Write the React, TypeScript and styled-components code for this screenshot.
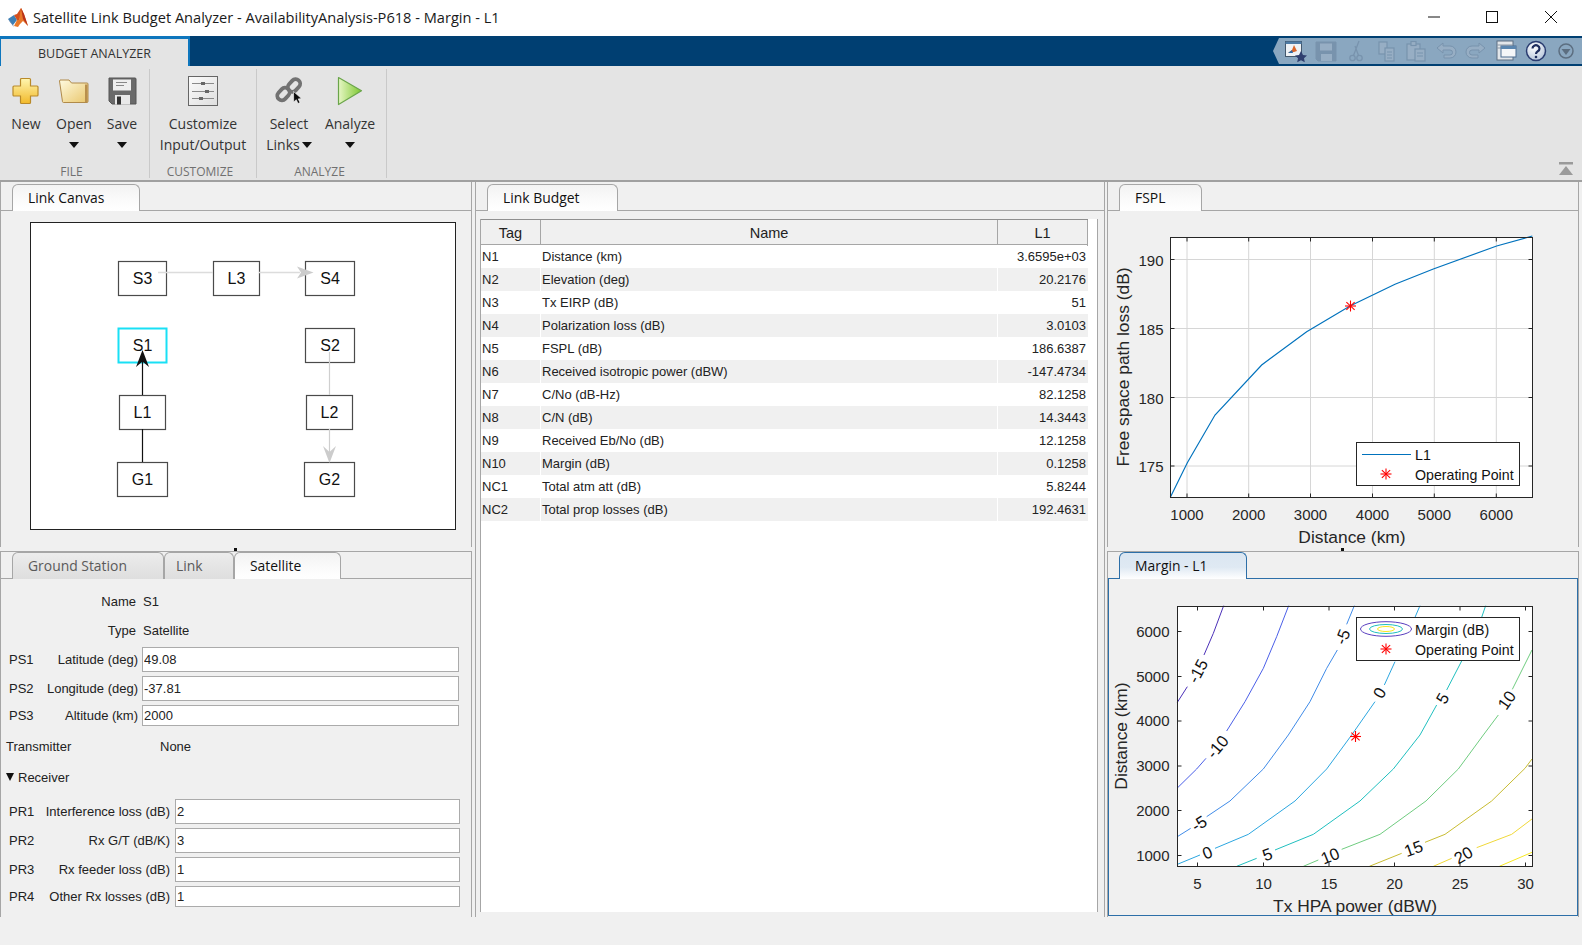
import React from 'react';
import styled, { createGlobalStyle } from 'styled-components';

const Global = createGlobalStyle`
  html, body { margin: 0; padding: 0; background: #f0f0f0; overflow: hidden; }
  #root { width: 1582px; height: 945px; }
  * { box-sizing: border-box; }
`;

const ui = `"Liberation Sans", Arial, sans-serif`;
const seg = `"Open Sans", "Noto Sans", sans-serif`;

const Page = styled.div`
  width: 1582px; height: 945px; display: flex; flex-direction: column;
  background: #f0f0f0; font-family: ${ui}; color: #222; overflow: hidden;
`;
const TitleBar = styled.div`
  height: 36px; background: #fff; display: flex; align-items: center; padding: 0 2px 0 7px;
`;
const TitleText = styled.div`
  font-family: ${seg}; font-size: 14.6px; color: #1a1a1a; margin: -2px 0 0 4px; white-space: nowrap; flex: 1;
`;
const WinBtn = styled.div`
  width: 58.5px; height: 36px; display: flex; align-items: center; justify-content: center;
  margin-top: -3px;
`;
const BlueBand = styled.div`
  height: 30px; background: #003f72; display: flex; align-items: center; justify-content: space-between;
`;
const RibbonTab = styled.div`
  width: 190px; height: 30px; align-self: flex-end; background: #e4e4e4; padding-top: 1px;
  border-top: 3px solid #0e76bd; border-right: 2px solid #0e76bd; border-left: 1px solid #0e76bd;
  font-family: ${seg}; font-size: 12.5px; color: #333; display: flex; align-items: center; justify-content: center;
`;
const QuickBar = styled.div`
  height: 26px; width: 309px; background: #8aa7c0; padding-left: 8px; display: flex; align-items: center;
  clip-path: polygon(6px 0, 100% 0, 100% 100%, 6px 100%, 0 50%);
`;
const QuickSlot = styled.div`
  width: 30px; height: 26px; display: flex; align-items: center; justify-content: center;
`;
const Ribbon = styled.div`
  height: 116px; background: #e4e4e4; display: flex; border-bottom: 2px solid #a0a0a0;
`;
const Section = styled.div<{ $w: number }>`
  width: ${p => p.$w}px; margin: 3px 0 2px; border-right: 1px solid #c9c9c9; display: flex; flex-direction: column;
`;
const ButtonRow = styled.div<{ $pad?: number }>`
  display: flex; flex: 1; padding-left: ${p => p.$pad ?? 0}px;
`;
const SectionLabel = styled.div<{ $pr: number }>`
  height: 26px; text-align: center; padding-right: ${p => p.$pr}px; padding-top: 9px;
  font-family: ${seg}; font-size: 12px; color: #707070; line-height: 16px;
`;
const RibButton = styled.div<{ $w: string }>`
  width: ${p => p.$w}; display: flex; flex-direction: column; align-items: center;
  font-family: ${seg}; font-size: 14px; color: #333; line-height: 21px;
`;
const IconSlot = styled.div`
  height: 34px; margin-top: 5px; margin-bottom: 5px; display: flex; align-items: center; justify-content: center;
`;
const LabelLine = styled.div`
  height: 21px; display: flex; align-items: center; white-space: nowrap;
`;
const Caret = styled.span<{ $gap?: number }>`
  display: inline-block; width: 0; height: 0; margin-left: ${p => p.$gap ?? 0}px;
  border-left: 5.5px solid transparent; border-right: 5.5px solid transparent; border-top: 6px solid #111;
`;
const Collapse = styled.div`
  margin-left: auto; margin-right: 9px; align-self: flex-end; margin-bottom: 6px; height: 13px;
`;
const Body = styled.div`
  display: flex; height: 735px;
`;
const LeftCol = styled.div`
  width: 472px; margin-right: 3px; display: flex; flex-direction: column;
`;
const MidCol = styled.div`
  width: 630px; margin-right: 2px; display: flex; flex-direction: column;
`;
const RightCol = styled.div`
  width: 472px; display: flex; flex-direction: column;
`;
const Panel = styled.div<{ $h?: number; $top?: number }>`
  ${p => (p.$h ? `height: ${p.$h}px;` : 'flex: 1;')}
  margin-top: ${p => p.$top ?? 0}px; display: flex; flex-direction: column; position: relative;
  border-left: 1px solid #a6a6a6; border-right: 1px solid #a6a6a6; background: #f0f0f0;
`;
const SplitterTick = styled.div`
  position: absolute; left: 233px; bottom: -4px; width: 3px; height: 3px; background: #111;
`;
const TabStrip = styled.div<{ $pad: number; $blue?: boolean; $h?: number; $line?: boolean }>`
  height: ${p => p.$h ?? 28}px; padding: 1px 0 0 ${p => p.$pad}px; display: flex; align-items: flex-end; flex: none;
  border-bottom: 1px solid ${p => (p.$blue ? '#2d6fa8' : '#a6a6a6')};
  ${p => (p.$line ? 'border-top: 1px solid #a6a6a6;' : '')}
`;
const Tab = styled.div<{ $w: number; $active?: boolean; $blue?: boolean; $pad?: number }>`
  width: ${p => p.$w}px; height: 27px; margin-bottom: -1px; padding-left: ${p => p.$pad ?? 15}px;
  border: 1px solid ${p => (p.$blue ? '#2d6fa8' : '#a6a6a6')}; border-bottom: none; border-radius: 6px 6px 0 0;
  background: ${p => p.$blue ? 'linear-gradient(#dbe6f1, #dfe9f3 55%, #fff)' : p.$active ? 'linear-gradient(#f3f3f3, #fbfbfb 60%, #fff)' : 'linear-gradient(#ececec, #dedede)'};
  color: ${p => (p.$active ? '#111' : '#5a5a5a')};
  font-family: ${seg}; font-size: 13.9px; line-height: 26px; white-space: nowrap;
`;
const CanvasBox = styled.div`
  margin: 11px 0 0 29px; width: 426px; height: 308px; border: 1px solid #222; background: #fff;
`;
const Form = styled.div`
  flex: 1; display: flex; flex-direction: column; font-size: 13px; color: #222;
`;
const FormRow = styled.div<{ $h: number; $mt?: number; $pl?: number }>`
  height: ${p => p.$h}px; margin-top: ${p => p.$mt ?? 0}px; display: flex; align-items: center; padding-left: ${p => p.$pl ?? 8}px;
  white-space: nowrap;
`;
const Tag = styled.div`
  width: 36px; flex: none;
`;
const FieldLabel = styled.div<{ $w: number; $pr?: number }>`
  width: ${p => p.$w}px; flex: none; text-align: right; padding-right: ${p => p.$pr ?? 4}px;
`;
const Plain = styled.div<{ $w?: number; $pl?: number }>`
  ${p => (p.$w ? `width: ${p.$w}px; flex: none;` : '')} padding-left: ${p => p.$pl ?? 0}px;
`;
const Field = styled.input`
  width: 100%; max-width: 317px; height: 100%; border: 1px solid #ababab; background: #fff; padding: 0 1px;
  font: 13px ${ui}; color: #222; outline: none; margin: 0;
`;
const FieldWide = styled(Field)`
  max-width: 285px;
`;
const TableBox = styled.div`
  margin: 8px 6px 5px 4px; flex: 1; background: #fff; border: 1px solid #a6a6a6; border-top: none; border-bottom: none;
  font-size: 13px; color: #222;
`;
const HeadRow = styled.div`
  display: grid; grid-template-columns: 60px 457px 90px; height: 26px; width: 607px; background: #f0f0f0;
  border-top: 1px solid #8f8f8f; border-bottom: 1px solid #a6a6a6; font-size: 14.5px; line-height: 26px; text-align: center;
`;
const HeadCell = styled.div`
  border-right: 1px solid #a6a6a6;
`;
const BodyRow = styled.div<{ $odd: boolean }>`
  display: grid; grid-template-columns: 60px 457px 90px; height: 23px; width: 607px; line-height: 24px;
  background: ${p => (p.$odd ? '#f0f0f0' : '#fff')};
`;
const TagCell = styled.div`
  padding-left: 1px; border-right: 1px solid #fff;
`;
const NameCell = styled.div`
  padding-left: 1px; border-right: 1px solid #fff;
`;
const ValueCell = styled.div`
  padding-right: 2px; text-align: right;
`;
const PlotHolder = styled.div`
  flex: 1; position: relative;
`;
const PlotSvg = styled.svg`
  display: block;
`;
const BluePane = styled.div`
  height: 337px; border: 1px solid #2d6fa8; border-top: none;
`;
const StatusBar = styled.div`
  flex: 1; background: #f0f0f0;
`;
const DrawG = styled.g`
  font-family: ${ui};
`;

/* --- icons --- */
const MatlabLogo = () => (
  <svg width="22" height="22" viewBox="0 0 22 22">
    <polygon points="1,12 7,8 10,13 6,18" fill="#3d7fb5" />
    <polygon points="1,12 6,18 7,20 3,15" fill="#1e4f86" />
    <polygon points="7,8 10,7 14,1 16,5 12,13 10,13" fill="#d4501e" />
    <polygon points="14,1 17,7 21,19 16,14 13,17 11,20 7,19 10,13 12,13" fill="#e8782a" />
    <polygon points="14,1 17,7 21,19 16,12" fill="#b8321a" />
  </svg>
);
const NewIcon = () => (
  <svg width="30" height="30" viewBox="0 0 30 30">
    <defs><linearGradient id="ng" x1="0" y1="0" x2="0" y2="1"><stop offset="0" stopColor="#fff6b0" /><stop offset="1" stopColor="#f2b92a" /></linearGradient></defs>
    <path d="M10.5 2.5h8a1 1 0 0 1 1 1v6.500h6.500a1 1 0 0 1 1 1v8a1 1 0 0 1-1 1h-6.500v6.500a1 1 0 0 1-1 1h-8a1 1 0 0 1-1-1v-6.500h-6.500a1 1 0 0 1-1-1v-8a1 1 0 0 1 1-1h6.500v-6.500a1 1 0 0 1 1-1z" fill="url(#ng)" stroke="#b98a2a" strokeWidth="1.200" />
  </svg>
);
const OpenIcon = () => (
  <svg width="32" height="28" viewBox="0 0 32 28">
    <defs><linearGradient id="og" x1="0" y1="0" x2="1" y2="1"><stop offset="0" stopColor="#fffbe0" /><stop offset="1" stopColor="#e9c66c" /></linearGradient></defs>
    <path d="M2 3h9l2.500 3H29a1 1 0 0 1 1 1v17.500a1 1 0 0 1-1 1H5.500a1 1 0 0 1-1-.800L1.500 4z" fill="url(#og)" stroke="#b08a4a" strokeWidth="1" />
    <path d="M27 7.500h2.500V25H27z" fill="#b98f4c" />
  </svg>
);
const SaveIcon = () => (
  <svg width="30" height="30" viewBox="0 0 30 30">
    <path d="M2 2h26a1 1 0 0 1 1 1v25H5l-3-3z" fill="#6a6a6a" stroke="#555" />
    <rect x="6" y="3.500" width="18" height="11" fill="#eeeeee" />
    <path d="M9 6.500h11M9 9.500h8" stroke="#888" strokeWidth="1" />
    <rect x="8" y="19" width="15" height="9.500" fill="#e9e9e9" />
    <rect x="10" y="20.500" width="4" height="8" fill="#333" />
  </svg>
);
const CustomizeIcon = () => (
  <svg width="30" height="30" viewBox="0 0 30 30">
    <defs><linearGradient id="cg" x1="0" y1="0" x2="1" y2="1"><stop offset="0" stopColor="#fbfbfb" /><stop offset="1" stopColor="#dedede" /></linearGradient></defs>
    <rect x=".5" y=".5" width="29" height="29" fill="url(#cg)" stroke="#666" />
    <path d="M4 7.500h22M4 15.500h22M4 22.500h22" stroke="#8a8a8a" />
    <path d="M13 7.500h4M17 15.500h4M11 22.500h4" stroke="#666" strokeWidth="3" />
  </svg>
);
const LinkIcon = () => (
  <svg width="30" height="28" viewBox="0 0 30 28">
    <g fill="none" stroke="#727272" strokeWidth="3.800">
      <rect x="-7" y="-4.500" width="14" height="9" rx="4.500" transform="translate(9.500 17) rotate(-48)" />
      <rect x="-7" y="-4.500" width="14" height="9" rx="4.500" transform="translate(20 8.500) rotate(-48)" />
    </g>
    <path d="M19.500 14.500l.2 10.500 2.600-2.300 1.700 3.800 2-1-1.800-3.600 3.300-.3z" fill="#0c0c0c" stroke="#fff" strokeWidth=".6" />
  </svg>
);
const PlayIcon = () => (
  <svg width="26" height="30" viewBox="0 0 26 30">
    <defs><linearGradient id="pg" x1="0" y1="0" x2="1" y2="0"><stop offset="0" stopColor="#e6f6c4" /><stop offset="1" stopColor="#7cc72e" /></linearGradient></defs>
    <path d="M1.500 1.500L24.500 14.800L1.500 28.500z" fill="url(#pg)" stroke="#6aa54a" strokeWidth="1.200" strokeLinejoin="round" />
  </svg>
);
const C = '#7893ad';
const F = '#97aec4';
const QuickIcons = [
  <svg key="a" width="24" height="24" viewBox="0 0 24 24">
    <rect x="1.500" y="2.500" width="16" height="15" fill="#eef2f6" stroke="#44586c" />
    <rect x="1.500" y="2.500" width="16" height="2.500" fill="#4d7ba5" />
    <path d="M4 14l4-3 2-5 3 6-3 1z" fill="#d9652a" /><path d="M4 14l4-3 1 3z" fill="#2f6aa5" />
    <path d="M17 12l2 4 4 .4-3 2.800 .8 4-3.800-2-3.800 2 .8-4-3-2.800 4-.4z" fill="#2f3f6f" />
  </svg>,
  <svg key="b" width="24" height="24" viewBox="0 0 24 24">
    <path d="M2 3h20v19H4l-2-2z" fill={C} stroke={C} />
    <rect x="6" y="4.500" width="12" height="7" fill={F} />
    <rect x="7" y="15" width="11" height="7" fill={F} />
  </svg>,
  <svg key="c" width="24" height="24" viewBox="0 0 24 24" fill="none" stroke={C} strokeWidth="1.300">
    <circle cx="8.500" cy="19" r="2.700" /><circle cx="15.500" cy="19" r="2.700" /><path d="M9.500 16.500L15 2M14.500 16.500L11 7" />
  </svg>,
  <svg key="d" width="24" height="24" viewBox="0 0 24 24" fill={F} stroke={C} strokeWidth="1.200">
    <rect x="5" y="3" width="8" height="12" /><rect x="11" y="9" width="9" height="13" /><path d="M13 13h5M13 16h5M13 19h5" />
  </svg>,
  <svg key="e" width="24" height="24" viewBox="0 0 24 24" fill={F} stroke={C} strokeWidth="1.200">
    <rect x="3" y="5" width="13" height="16" /><rect x="7" y="2.500" width="5" height="4" /><rect x="11" y="10" width="10" height="12" /><path d="M13 14h6M13 17h6" />
  </svg>,
  <svg key="f" width="24" height="24" viewBox="0 0 24 24" fill="none" stroke={C} strokeWidth="2">
    <path d="M3 9l6-5v3h7a5 5 0 0 1 0 12h-6v-3h6a2 2 0 0 0 0-5H9v3z" fill={F} strokeWidth="1" />
  </svg>,
  <svg key="g" width="24" height="24" viewBox="0 0 24 24" fill="none" stroke={C} strokeWidth="2">
    <path d="M21 9l-6-5v3H8a5 5 0 0 0 0 12h6v-3H8a2 2 0 0 1 0-5h7v3z" fill={F} strokeWidth="1" />
  </svg>,
  <svg key="h" width="24" height="24" viewBox="0 0 24 24">
    <rect x="3" y="2" width="16" height="19" fill="#e2e6ea" stroke="#5d6f82" />
    <path d="M3 6h16M3 9h4" stroke="#8a98a6" />
    <rect x="7" y="7" width="15" height="11" fill="#f4f6f8" stroke="#4d6d90" />
    <rect x="7" y="7" width="15" height="3" fill="#5a86b0" />
  </svg>,
  <svg key="i" width="24" height="24" viewBox="0 0 24 24">
    <defs><radialGradient id="hg" cx=".4" cy=".3" r=".8"><stop offset="0" stopColor="#fff" /><stop offset="1" stopColor="#aebfd6" /></radialGradient></defs>
    <circle cx="12" cy="12" r="9.500" fill="url(#hg)" stroke="#2a3c70" strokeWidth="1.500" />
    <path d="M8.500 9.500a3.500 3.200 0 1 1 5.300 2.700c-1.300.8-1.800 1.300-1.800 2.800" fill="none" stroke="#1d2c5c" strokeWidth="2.200" />
    <circle cx="12" cy="18" r="1.300" fill="#1d2c5c" />
  </svg>,
  <svg key="j" width="20" height="20" viewBox="0 0 20 20">
    <circle cx="10" cy="10" r="7" fill="none" stroke="#5c6e80" strokeWidth="1.500" />
    <path d="M5.500 8h9L10 14z" fill="#5c6e80" />
  </svg>,
];

const Asterisk = ({ x, y, r = 5.5 }: { x: number; y: number; r?: number }) => (
  <g stroke="#ff0000" strokeWidth="1.100">
    <line x1={x} y1={y - r} x2={x} y2={y + r} />
    <line x1={x - r} y1={y} x2={x + r} y2={y} />
    <line x1={x - r * 0.75} y1={y - r * 0.7} x2={x + r * 0.75} y2={y + r * 0.7} />
    <line x1={x - r * 0.75} y1={y + r * 0.7} x2={x + r * 0.75} y2={y - r * 0.7} />
  </g>
);

/* --- link diagram --- */
type NodeDef = { t: string; x: number; y: number; w: number; cyan?: boolean };
const nodes: NodeDef[] = [
  { t: 'S3', x: 118, y: 261, w: 48 }, { t: 'L3', x: 213, y: 261, w: 46 }, { t: 'S4', x: 305, y: 261, w: 49 },
  { t: 'S1', x: 118, y: 328, w: 48, cyan: true }, { t: 'S2', x: 305, y: 328, w: 49 },
  { t: 'L1', x: 119, y: 395, w: 46 }, { t: 'L2', x: 306, y: 395, w: 46 },
  { t: 'G1', x: 117, y: 462, w: 50 }, { t: 'G2', x: 304, y: 462, w: 50 },
];
const LinkDiagram = () => (
  <svg width="424" height="306" viewBox="31 223 424 306" style={{ display: 'block' }}>
    <DrawG>
      {nodes.map(n => (
        <g key={n.t}>
          <rect x={n.x + 0.5} y={n.y + 0.5} width={n.w} height={34} fill="#fff"
            stroke={n.cyan ? '#19e0f5' : '#4a4a4a'} strokeWidth={n.cyan ? 2 : 1.200} />
          <text x={n.x + n.w / 2 + 0.5} y={n.y + 22.500} fontSize="16" textAnchor="middle" fill="#111">{n.t}</text>
        </g>
      ))}
      <path d="M158 272.500H213M259 272.500H300" stroke="#dcdcdc" strokeWidth="1.500" />
      <path d="M313.500 272.500L297 266.500L301 272.500L297 278.500z" fill="#cccccc" />
      <path d="M329.500 352V395M329.500 429V452" stroke="#cfcfcf" strokeWidth="1.200" />
      <path d="M329.500 463L323 446L329.500 452L336 446z" fill="#cccccc" />
      <path d="M142.500 462V429M142.500 395V360" stroke="#111" strokeWidth="1.200" />
      <path d="M142.500 350L136 367L142.500 361.500L149 367z" fill="#111" />
    </DrawG>
  </svg>
);

/* --- plots --- */
const tickStyle = { fontSize: 15, fill: '#262626' };
const GRID = '#d6d6d6';

const FsplPlot = () => {
  const xs = [1187, 1248.700, 1310.500, 1372.500, 1434.300, 1496.300];
  const ys = [259.500, 328.500, 397.500, 466];
  const L = 1170.500, R = 1532.500, T = 237.500, B = 497.500;
  const pts = [[211, 952], [262, 848], [345, 705], [485, 555], [620, 455], [750, 378], [885, 313], [1000, 267], [1190, 198], [1297, 168]];
  return (
    <PlotSvg width="470" height="336" viewBox="1108 211 470 336">
      <DrawG>
        <rect x={L} y={T} width={R - L} height={B - T} fill="#fff" />
        {xs.map(x => <line key={x} x1={x} x2={x} y1={T} y2={B} stroke={GRID} />)}
        {ys.map(y => <line key={y} y1={y} y2={y} x1={L} x2={R} stroke={GRID} />)}
        <g transform="translate(1100 180) scale(.33333)">
          <polyline points={pts.map(p => p.join(',')).join(' ')} fill="none" stroke="#0072bd" strokeWidth="3.500" />
        </g>
        <Asterisk x={1350.500} y={306} />
        {xs.map(x => <path key={x} d={`M${x} ${B}v-4M${x} ${T}v4`} stroke="#262626" />)}
        {ys.map(y => <path key={y} d={`M${L} ${y}h4M${R} ${y}h-4`} stroke="#262626" />)}
        <rect x={L} y={T} width={R - L} height={B - T} fill="none" stroke="#262626" />
        {xs.map((x, i) => <text key={x} x={x} y={520} textAnchor="middle" {...tickStyle}>{(i + 1) * 1000}</text>)}
        {ys.map((y, i) => <text key={y} x={1163.500} y={y + 6} textAnchor="end" {...tickStyle}>{190 - i * 5}</text>)}
        <text x={1352} y={543} textAnchor="middle" fontSize="17.400" fill="#262626">Distance (km)</text>
        <text transform="translate(1129 367) rotate(-90)" textAnchor="middle" fontSize="17.400" fill="#262626">Free space path loss (dB)</text>
        <rect x={1356.500} y={442.500} width={163} height={43} fill="#fff" stroke="#262626" />
        <line x1={1362} x2={1411} y1={454.500} y2={454.500} stroke="#0072bd" />
        <text x={1415} y={460} fontSize="14.200" fill="#111">L1</text>
        <Asterisk x={1386} y={474} />
        <text x={1415} y={480} fontSize="14.200" fill="#111">Operating Point</text>
      </DrawG>
    </PlotSvg>
  );
};

type Contour = { c: string; segs: number[][][]; };
const contours: Contour[] = [
  { c: '#4a2fb8', segs: [[[232, 472], [262, 425]], [[312, 330], [340, 265], [371, 182]]] },
  { c: '#4a5ee8', segs: [[[232, 729], [290, 672], [318, 640]], [[380, 558], [435, 470], [490, 370], [530, 275], [566, 182]]] },
  { c: '#3f8be8', segs: [[[232, 875], [272, 850]], [[320, 815], [390, 768], [490, 672], [565, 570], [630, 470], [680, 370], [712, 315]], [[740, 238], [763, 182]]] },
  { c: '#2ba6e0', segs: [[[232, 958], [300, 930]], [[345, 910], [445, 868], [585, 768], [680, 672], [755, 570], [825, 470]], [[853, 420], [885, 350]], [[945, 217], [960, 182]]] },
  { c: '#1fbfbf', segs: [[[410, 964], [470, 940]], [[525, 915], [640, 868], [780, 768], [880, 672], [960, 570], [1010, 480]], [[1040, 435], [1085, 348]], [[1145, 217], [1157, 182]]] },
  { c: '#6ecc80', segs: [[[610, 964], [655, 945]], [[725, 913], [840, 868], [978, 768], [1075, 672], [1150, 570], [1195, 510]], [[1237, 433], [1296, 315]]] },
  { c: '#c8bc30', segs: [[[808, 964], [905, 925]], [[975, 892], [1035, 868], [1175, 768], [1275, 670], [1296, 642]]] },
  { c: '#f0d838', segs: [[[1000, 964], [1055, 940]], [[1130, 908], [1235, 868], [1296, 822]]] },
  { c: '#f7e820', segs: [[[1198, 964], [1296, 922]]] },
];
const cLabels: [string, number, number, number][] = [
  ['-15', 293, 378, -62], ['-10', 352, 605, -50], ['-5', 297, 835, -32], ['-5', 727, 275, -68],
  ['0', 322, 922, -22], ['0', 838, 443, -60], ['5', 502, 928, -20], ['5', 1027, 460, -60],
  ['10', 690, 932, -22], ['10', 1220, 465, -55], ['15', 940, 910, -20], ['20', 1090, 930, -30],
];
const MarginPlot = () => {
  const xs = [1197.500, 1263.500, 1329, 1394.500, 1460, 1525.500];
  const ys = [631.500, 676.500, 721, 766, 810.500, 855.500];
  const L = 1177.500, R = 1532.500, T = 606.500, B = 866.500;
  return (
    <PlotSvg width="469" height="336" viewBox="1109 579 469 336">
      <DrawG>
        <rect x={L} y={T} width={R - L} height={B - T} fill="#fff" />
        <g transform="translate(1100 545) scale(.33333)">
          {contours.map(k => k.segs.map((s, i) => (
            <polyline key={k.c + i} points={s.map(p => p.join(',')).join(' ')} fill="none" stroke={k.c} strokeWidth="3" />
          )))}
          {cLabels.map(([t, x, y, r]) => (
            <text key={t + x} transform={`translate(${x} ${y}) rotate(${r})`} textAnchor="middle" dy="18" fontSize="50" fill="#111">{t}</text>
          ))}
        </g>
        <Asterisk x={1355.500} y={736.500} />
        {xs.map(x => <path key={x} d={`M${x} ${B}v-4M${x} ${T}v4`} stroke="#262626" />)}
        {ys.map(y => <path key={y} d={`M${L} ${y}h4M${R} ${y}h-4`} stroke="#262626" />)}
        <rect x={L} y={T} width={R - L} height={B - T} fill="none" stroke="#262626" />
        {xs.map((x, i) => <text key={x} x={x} y={889} textAnchor="middle" {...tickStyle}>{(i + 1) * 5}</text>)}
        {ys.map((y, i) => <text key={y} x={1169.500} y={y + 5} textAnchor="end" {...tickStyle}>{6000 - i * 1000}</text>)}
        <text x={1355} y={912} textAnchor="middle" fontSize="17.400" fill="#262626">Tx HPA power (dBW)</text>
        <text transform="translate(1127 736) rotate(-90)" textAnchor="middle" fontSize="17.400" fill="#262626">Distance (km)</text>
        <rect x={1356.500} y={617.500} width={163} height={43} fill="#fff" stroke="#262626" />
        <ellipse cx={1386} cy={629} rx={25.500} ry={7.300} fill="none" stroke="#5a3fc0" />
        <ellipse cx={1386} cy={629} rx={16.500} ry={4.500} fill="none" stroke="#1fbfbf" />
        <ellipse cx={1386} cy={629} rx={8.500} ry={2.500} fill="none" stroke="#f7e820" />
        <text x={1415} y={635} fontSize="14.200" fill="#111">Margin (dB)</text>
        <Asterisk x={1386} y={649} />
        <text x={1415} y={655} fontSize="14.200" fill="#111">Operating Point</text>
      </DrawG>
    </PlotSvg>
  );
};

const budget = [
  ['N1', 'Distance (km)', '3.6595e+03'], ['N2', 'Elevation (deg)', '20.2176'], ['N3', 'Tx EIRP (dB)', '51'],
  ['N4', 'Polarization loss (dB)', '3.0103'], ['N5', 'FSPL (dB)', '186.6387'], ['N6', 'Received isotropic power (dBW)', '-147.4734'],
  ['N7', 'C/No (dB-Hz)', '82.1258'], ['N8', 'C/N (dB)', '14.3443'], ['N9', 'Received Eb/No (dB)', '12.1258'],
  ['N10', 'Margin (dB)', '0.1258'], ['NC1', 'Total atm att (dB)', '5.8244'], ['NC2', 'Total prop losses (dB)', '192.4631'],
];

const RibBtn = ({ w, icon, l1, l2, caret, inlineCaret }: { w: string; icon: React.ReactNode; l1: string; l2?: string; caret?: boolean; inlineCaret?: boolean }) => (
  <RibButton $w={w}>
    <IconSlot>{icon}</IconSlot>
    <LabelLine>{l1}</LabelLine>
    <LabelLine>{l2}{caret && <Caret />}{inlineCaret && <Caret $gap={2} />}</LabelLine>
  </RibButton>
);

export default function App() {
  return (
    <Page>
      <Global />
      <TitleBar>
        <MatlabLogo />
        <TitleText>Satellite Link Budget Analyzer - AvailabilityAnalysis-P618 - Margin - L1</TitleText>
        <WinBtn><svg width="12" height="12" viewBox="0 0 12 12"><path d="M0 6h12" stroke="#111" /></svg></WinBtn>
        <WinBtn><svg width="12" height="12" viewBox="0 0 12 12"><rect x=".5" y=".5" width="11" height="11" fill="none" stroke="#111" /></svg></WinBtn>
        <WinBtn><svg width="12" height="12" viewBox="0 0 12 12"><path d="M0 0l12 12M12 0L0 12" stroke="#111" /></svg></WinBtn>
      </TitleBar>
      <BlueBand>
        <RibbonTab>BUDGET ANALYZER</RibbonTab>
        <QuickBar>{QuickIcons.map((ic, i) => <QuickSlot key={i}>{ic}</QuickSlot>)}</QuickBar>
      </BlueBand>
      <Ribbon>
        <Section $w={150}>
          <ButtonRow $pad={2}>
            <RibBtn w="48px" icon={<NewIcon />} l1="New" />
            <RibBtn w="48px" icon={<OpenIcon />} l1="Open" caret />
            <RibBtn w="48px" icon={<SaveIcon />} l1="Save" caret />
          </ButtonRow>
          <SectionLabel $pr={6}>FILE</SectionLabel>
        </Section>
        <Section $w={107}>
          <ButtonRow>
            <RibBtn w="100%" icon={<CustomizeIcon />} l1="Customize" l2="Input/Output" />
          </ButtonRow>
          <SectionLabel $pr={6}>CUSTOMIZE</SectionLabel>
        </Section>
        <Section $w={130}>
          <ButtonRow>
            <RibBtn w="64px" icon={<LinkIcon />} l1="Select" l2="Links" inlineCaret />
            <RibBtn w="58px" icon={<PlayIcon />} l1="Analyze" caret />
          </ButtonRow>
          <SectionLabel $pr={4}>ANALYZE</SectionLabel>
        </Section>
        <Collapse>
          <svg width="14" height="13" viewBox="0 0 14 13"><rect x="0" y="0" width="14" height="2.500" fill="#9a9a9a" /><path d="M7 4l7 9H0z" fill="#9a9a9a" /></svg>
        </Collapse>
      </Ribbon>
      <Body>
        <LeftCol>
          <Panel $h={365}>
            <TabStrip $pad={11} $h={29}><Tab $w={128} $active>Link Canvas</Tab></TabStrip>
            <CanvasBox><LinkDiagram /></CanvasBox>
            <SplitterTick />
          </Panel>
          <Panel $h={366} $top={4}>
            <TabStrip $pad={11} $line>
              <Tab $w={152}>Ground Station</Tab>
              <Tab $w={70} $pad={11}>Link</Tab>
              <Tab $w={107} $active>Satellite</Tab>
            </TabStrip>
            <Form>
              <FormRow $h={29} $mt={8}><Tag /><FieldLabel $w={95}>Name</FieldLabel><Plain $pl={3}>S1</Plain></FormRow>
              <FormRow $h={29}><Tag /><FieldLabel $w={95}>Type</FieldLabel><Plain $pl={3}>Satellite</Plain></FormRow>
              <FormRow $h={25} $mt={2}><Tag>PS1</Tag><FieldLabel $w={97}>Latitude (deg)</FieldLabel><Field readOnly value="49.08" /></FormRow>
              <FormRow $h={25} $mt={4}><Tag>PS2</Tag><FieldLabel $w={97}>Longitude (deg)</FieldLabel><Field readOnly value="-37.81" /></FormRow>
              <FormRow $h={21} $mt={4}><Tag>PS3</Tag><FieldLabel $w={97}>Altitude (km)</FieldLabel><Field readOnly value="2000" /></FormRow>
              <FormRow $h={20} $mt={10} $pl={5}><Plain $w={154}>Transmitter</Plain><Plain>None</Plain></FormRow>
              <FormRow $h={20} $mt={11} $pl={5}>
                <svg width="12" height="10" viewBox="0 0 12 10"><path d="M0 1h8L4 9z" fill="#111" /></svg>
                <Plain>Receiver</Plain>
              </FormRow>
              <FormRow $h={25} $mt={12}><Tag>PR1</Tag><FieldLabel $w={130} $pr={5}>Interference loss (dB)</FieldLabel><FieldWide readOnly value="2" /></FormRow>
              <FormRow $h={25} $mt={4}><Tag>PR2</Tag><FieldLabel $w={130} $pr={5}>Rx G/T (dB/K)</FieldLabel><FieldWide readOnly value="3" /></FormRow>
              <FormRow $h={25} $mt={4}><Tag>PR3</Tag><FieldLabel $w={130} $pr={5}>Rx feeder loss (dB)</FieldLabel><FieldWide readOnly value="1" /></FormRow>
              <FormRow $h={21} $mt={4}><Tag>PR4</Tag><FieldLabel $w={130} $pr={5}>Other Rx losses (dB)</FieldLabel><FieldWide readOnly value="1" /></FormRow>
            </Form>
          </Panel>
        </LeftCol>
        <MidCol>
          <Panel>
            <TabStrip $pad={11} $h={29}><Tab $w={131} $active>Link Budget</Tab></TabStrip>
            <TableBox>
              <HeadRow><HeadCell>Tag</HeadCell><HeadCell>Name</HeadCell><HeadCell>L1</HeadCell></HeadRow>
              {budget.map((r, i) => (
                <BodyRow key={r[0]} $odd={i % 2 === 1}>
                  <TagCell>{r[0]}</TagCell><NameCell>{r[1]}</NameCell><ValueCell>{r[2]}</ValueCell>
                </BodyRow>
              ))}
            </TableBox>
          </Panel>
        </MidCol>
        <RightCol>
          <Panel $h={365}>
            <TabStrip $pad={11} $h={29}><Tab $w={83} $active>FSPL</Tab></TabStrip>
            <PlotHolder><FsplPlot /></PlotHolder>
            <SplitterTick />
          </Panel>
          <Panel $h={366} $top={4}>
            <TabStrip $pad={11} $blue $line><Tab $w={128} $active $blue>Margin - L1</Tab></TabStrip>
            <BluePane><MarginPlot /></BluePane>
          </Panel>
        </RightCol>
      </Body>
      <StatusBar />
    </Page>
  );
}
